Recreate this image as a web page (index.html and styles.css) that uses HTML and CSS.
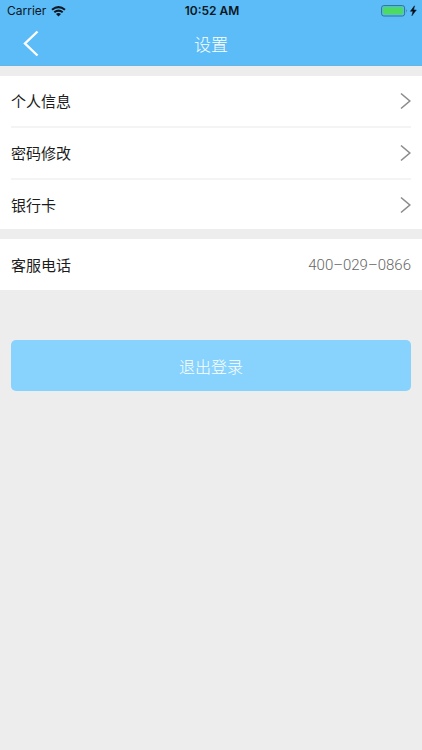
FILE: index.html
```html
<!DOCTYPE html>
<html lang="zh-CN">
<head>
<meta charset="utf-8">
<meta name="viewport" content="width=device-width, initial-scale=1">
<title>设置</title>
<link rel="stylesheet" href="styles.css">
</head>
<body>
<header class="top">
  <div class="status">
    <div class="status-left">
      <span>Carrier</span>
      <svg class="wifi" width="15" height="11" viewBox="0 0 15 11" aria-hidden="true">
        <path d="M1 3.8Q7.5-1.6 14 3.8M3.3 6.3Q7.5 2.9 11.7 6.3" fill="none" stroke="#0b1722" stroke-width="2"/>
        <path d="M5 8Q7.5 6 10 8L7.5 10.600Z" fill="#0b1722"/>
      </svg>
    </div>
    <time class="clock">10:52 AM</time>
    <div class="status-right">
      <svg width="36" height="12" viewBox="0 0 36 12" aria-hidden="true">
        <rect x=".6" y=".6" width="23" height="10.400" rx="2.200" fill="none" stroke="#2f7297" stroke-width="1"/>
        <rect x="2" y="2" width="20.200" height="7.600" rx="1" fill="#4cd964"/>
        <path d="M25 4Q26.400 5.800 25 7.600Z" fill="#2f7297"/>
        <path d="M33.500 .8L29.400 6.300H32L30.900 10.700L35.300 5H32.600Z" fill="#06111b" stroke="#06111b" stroke-width=".5"/>
      </svg>
    </div>
  </div>
  <div class="nav">
    <button class="back" type="button" aria-label="返回">
      <svg width="16" height="28" viewBox="0 0 16 28" aria-hidden="true"><path d="M14.500 1.500L2 13.500L14.500 25.500" fill="none" stroke="#fff" stroke-width="2.400"/></svg>
    </button>
    <h1 class="title">设置</h1>
  </div>
</header>
<main class="content">
  <nav class="group">
    <a class="row" href="#profile"><span>个人信息</span><svg class="chevron" width="12" height="18" viewBox="0 0 12 18" aria-hidden="true"><path d="M2 1.500L10.800 9L2 16.500"/></svg></a>
    <a class="row" href="#password"><span>密码修改</span><svg class="chevron" width="12" height="18" viewBox="0 0 12 18" aria-hidden="true"><path d="M2 1.500L10.800 9L2 16.500"/></svg></a>
    <a class="row" href="#card"><span>银行卡</span><svg class="chevron" width="12" height="18" viewBox="0 0 12 18" aria-hidden="true"><path d="M2 1.500L10.800 9L2 16.500"/></svg></a>
  </nav>
  <div class="group">
    <div class="row"><span>客服电话</span><a class="phone" href="tel:4000290866">400–029–0866</a></div>
  </div>
  <button class="logout" type="button">退出登录</button>
</main>
</body>
</html>
```
FILE: styles.css
```css
* {
  box-sizing: border-box;
}

body {
  margin: 0;
  min-height: 100vh;
  background: #ededed;
  color: #1c1c1c;
  font-family: "Noto Sans CJK SC", sans-serif;
}

.top {
  background: #5bbcf8;
  border-bottom: 1px solid #69b4e2;
}

.status {
  display: grid;
  grid-template-columns: 1fr auto 1fr;
  align-items: center;
  height: 22px;
  padding: 0 5px 0 7px;
  color: #0b1722;
  font: 12px/22px Inter, sans-serif;
}

.status-left {
  display: flex;
  align-items: center;
  gap: 5px;
}

.clock {
  font-weight: 600;
}

.status-right {
  display: flex;
  justify-content: flex-end;
}

.nav {
  display: grid;
  grid-template-columns: 48px 1fr 48px;
  align-items: center;
  height: 43px;
}

.back {
  display: flex;
  justify-content: flex-end;
  align-items: center;
  height: 43px;
  padding: 0 9px 0 0;
  border: 0;
  background: none;
}

.title {
  margin: 0;
  color: #fff;
  font-size: 17px;
  font-weight: 300;
  line-height: 44px;
  text-align: center;
}

.content {
  display: flex;
  flex-direction: column;
  gap: 10px;
  padding-top: 10px;
}

.group {
  padding: 0 11px;
  background: #fff;
}

.row {
  display: flex;
  align-items: center;
  justify-content: space-between;
  height: 52px;
  border-bottom: 2px solid #f4f4f4;
  color: inherit;
  font-size: 15px;
  line-height: 22px;
  text-decoration: none;
}

.row:last-child {
  height: 49px;
  border-bottom: 0;
}

.group + .group .row {
  height: 51px;
}

.chevron {
  fill: none;
  stroke: #8c8c8c;
  stroke-width: 1.600;
}

.phone {
  color: #666;
  font: 300 15px Roboto, sans-serif;
  text-decoration: none;
}

.logout {
  height: 51px;
  margin: 40px 11px 0;
  border: 0;
  border-radius: 5px;
  background: #87d3fe;
  color: #fff;
  font: 300 16px "Noto Sans CJK SC", sans-serif;
}
```
